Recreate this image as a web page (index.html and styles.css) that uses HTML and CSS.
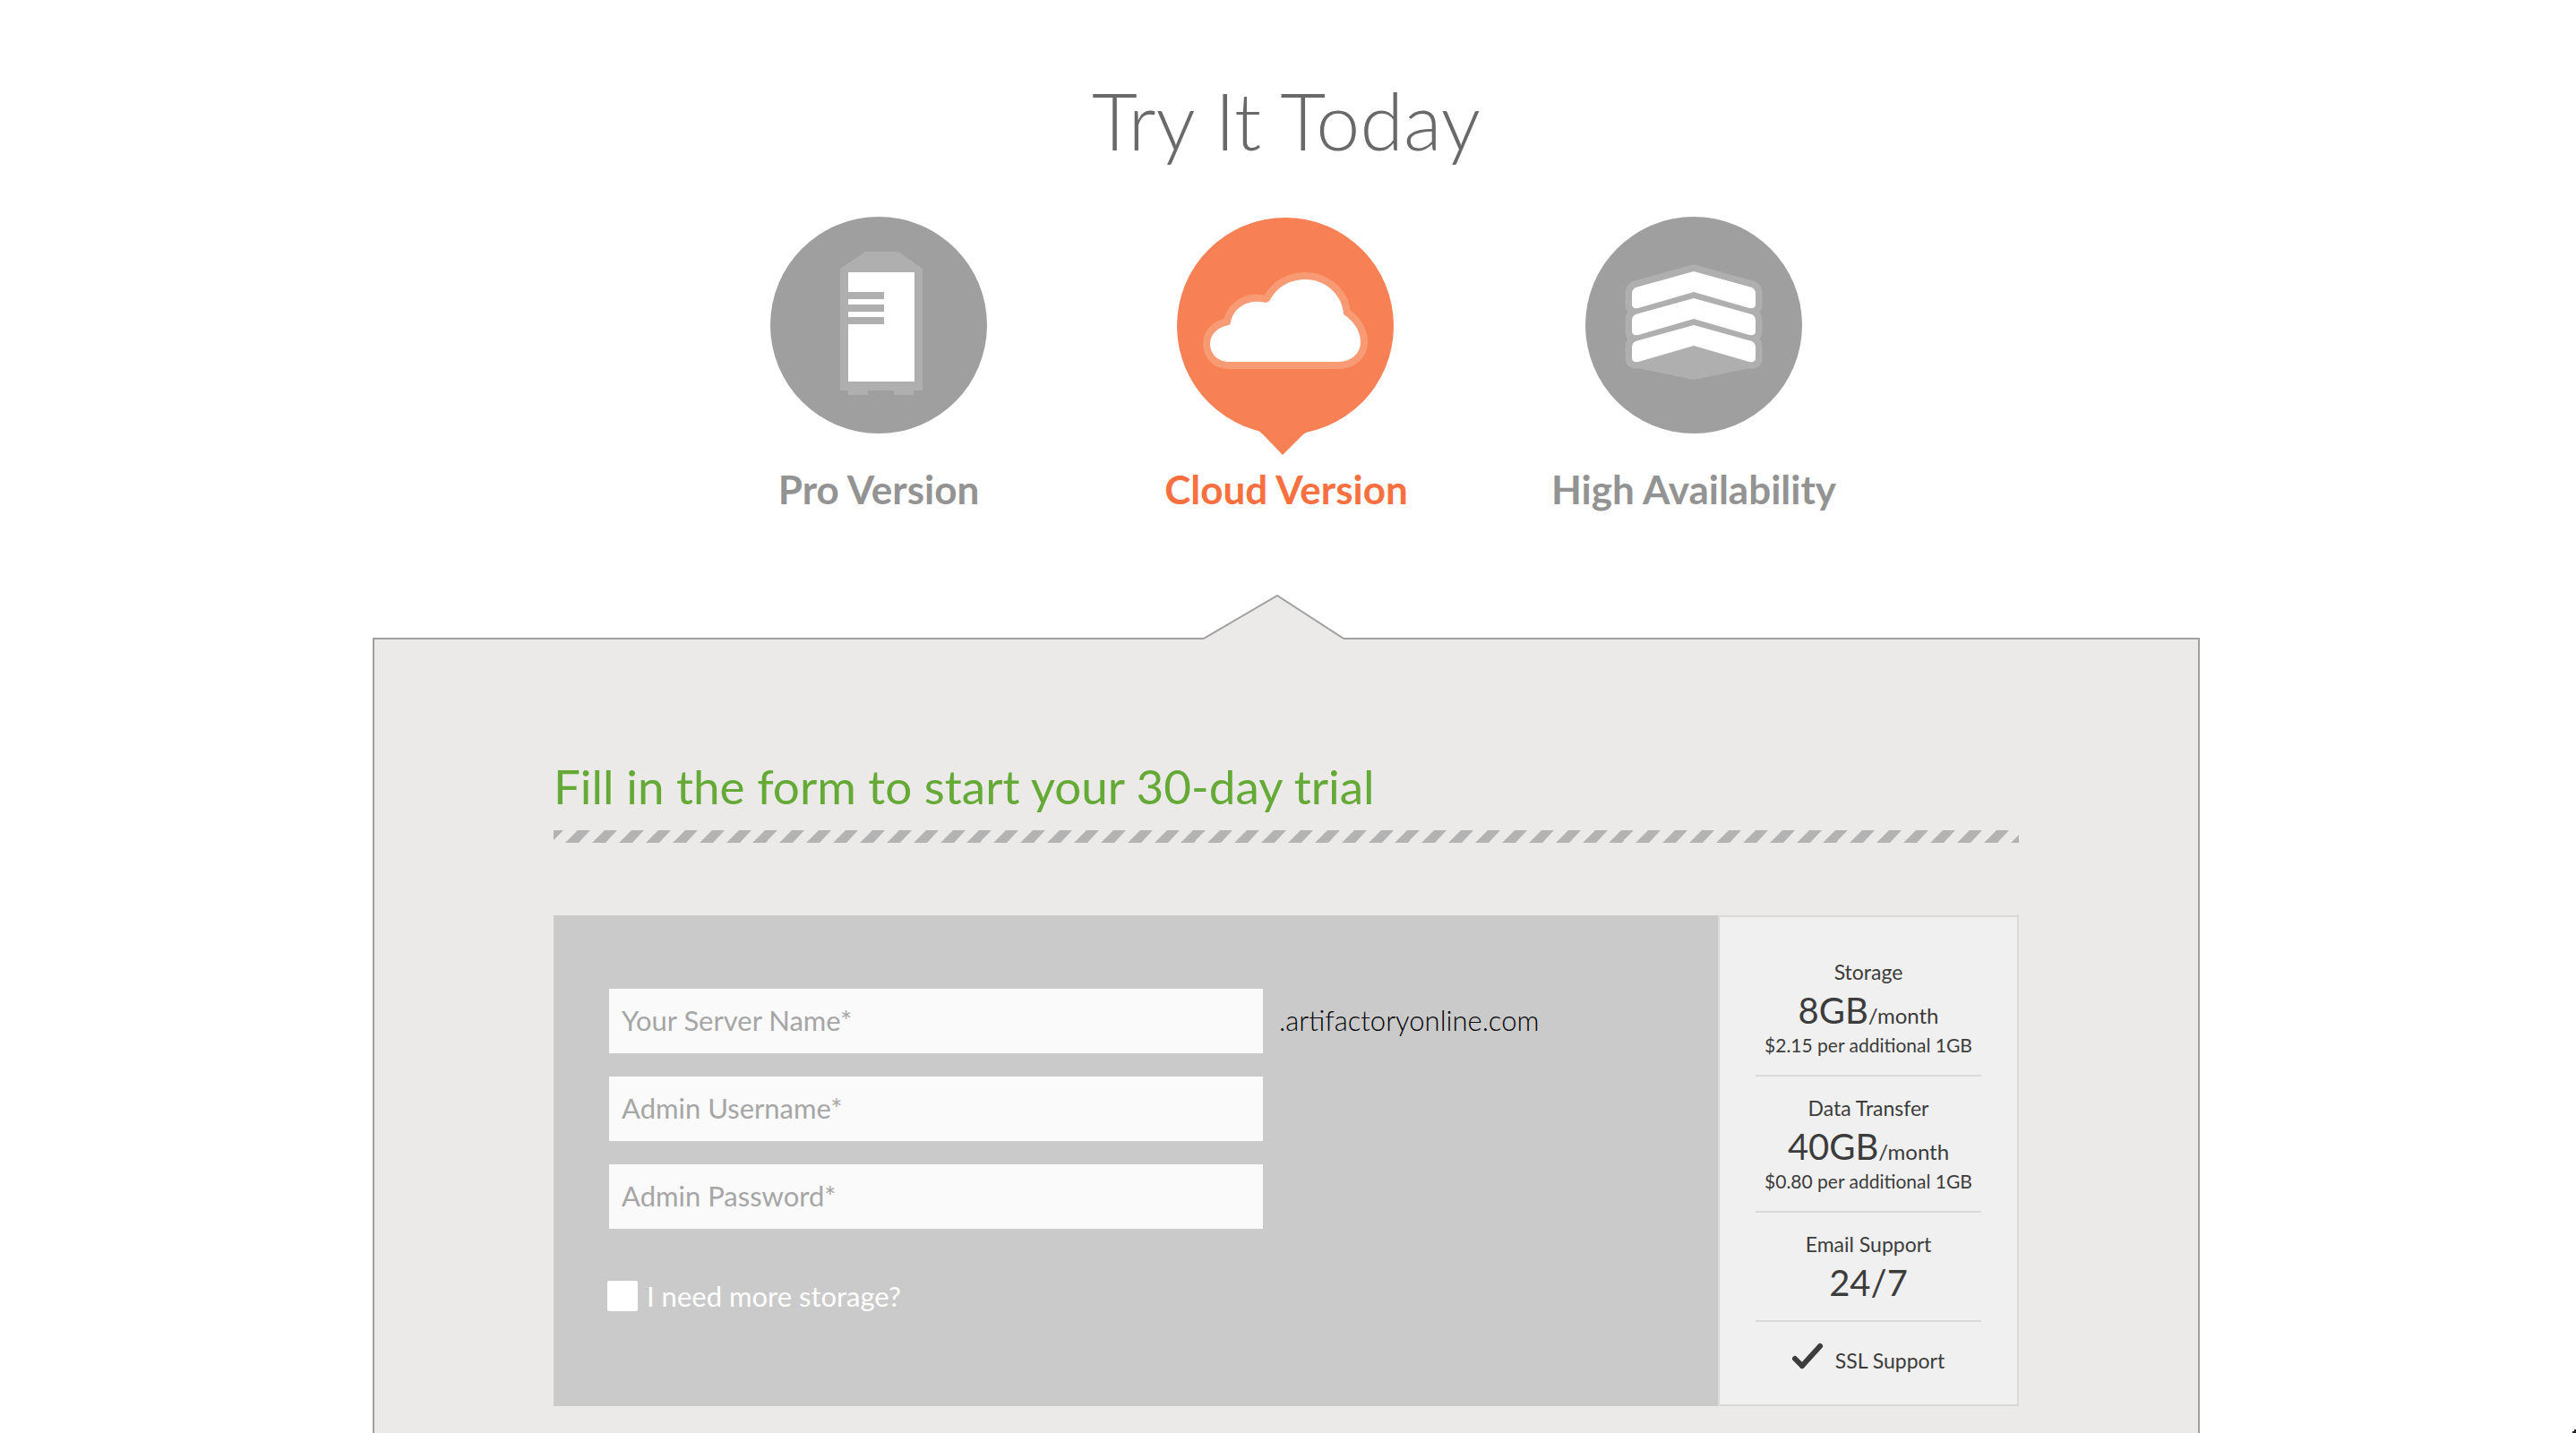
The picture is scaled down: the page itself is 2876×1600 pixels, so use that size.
FILE: index.html
```html
<!DOCTYPE html>
<html lang="en">
<head>
<meta charset="utf-8">
<meta name="viewport" content="width=device-width, initial-scale=1">
<title>Try It Today</title>
<link rel="stylesheet" href="styles.css">
</head>
<body>
<h1 class="title">Try It Today</h1>

<nav class="versions" aria-label="Versions">
  <button class="version" type="button">
    <svg class="version-icon" viewBox="0 0 244 270" aria-hidden="true">
      <circle cx="122" cy="121" r="121" fill="#9f9f9f"/>
      <path fill="#afafaf" d="M107 39H144L171 58V194H161V199H139V194H110V199H88V194H79V58Z"/>
      <path fill="#fff" d="M88 62H162V184H88V120H128V112H88V106H128V98H88V92H128V84H88Z"/>
    </svg>
    <span class="version-name">Pro Version</span>
  </button>
  <button class="version version-active" type="button" aria-current="true">
    <svg class="version-icon" viewBox="0 0 244 270" aria-hidden="true">
      <circle cx="121" cy="122" r="121" fill="#f78154"/>
      <path fill="#f78154" d="M88 237Q93 240 96 243L118 266L140 244Q143 241 150 238Z"/>
      <path fill="#fff" stroke="#f89a73" stroke-width="16" stroke-linejoin="round" paint-order="stroke" d="M58 162C46 162 37 153 37 142C37 131 46 123 58 121Q60 120 60 118C63 101 80 91 99 96Q102 96 104 93C111 79 126 70 143 70C167 70 185 88 186 109C197 116 205 127 205 140C205 153 194 162 180 162Z"/>
    </svg>
    <span class="version-name">Cloud Version</span>
  </button>
  <button class="version" type="button">
    <svg class="version-icon" viewBox="0 0 244 270" aria-hidden="true">
      <defs>
        <path id="layer" d="M122 61L187 79Q191 81 191 86V98Q191 103 184 102L122 84L60 102Q53 103 53 98V86Q53 81 57 79Z"/>
      </defs>
      <circle cx="122" cy="121" r="121" fill="#9f9f9f"/>
      <g fill="#afafaf" stroke="#afafaf" stroke-width="15" stroke-linejoin="round">
        <use href="#layer"/>
        <use href="#layer" y="30"/>
        <use href="#layer" y="60"/>
      </g>
      <path fill="#afafaf" d="M122 144L184 160L190 168L122 182L54 168L60 160Z"/>
      <g fill="#fff">
        <use href="#layer"/>
        <use href="#layer" y="30"/>
        <use href="#layer" y="60"/>
      </g>
    </svg>
    <span class="version-name">High Availability</span>
  </button>
</nav>

<main class="panel">
  <svg class="panel-arrow" viewBox="0 0 156 50" aria-hidden="true">
    <path fill="#ebeae8" d="M0 50V49L82 1L156 49V50Z"/>
    <path fill="none" stroke="#a0a0a0" stroke-width="2" d="M0 49L82 1L156 49"/>
  </svg>
  <h2 class="heading">Fill in the form to start your 30-day trial</h2>
  <svg class="stripes" aria-hidden="true">
    <defs>
      <pattern id="hatch" width="239" height="16" patternUnits="userSpaceOnUse">
        <path fill="#b3b3b3" d="M-3 15H-17L-3 1H11ZM28 15H13L27 1H41ZM58 15H43L57 1H71ZM88 15H73L87 1H101ZM118 15H103L117 1H131ZM148 15H133L147 1H161ZM178 15H163L177 1H191ZM208 15H193L207 1H221ZM237 15H222L236 1H250Z"/>
      </pattern>
    </defs>
    <rect width="100%" height="16" fill="url(#hatch)"/>
  </svg>

  <div class="trial">
    <form class="form">
      <div class="fields">
        <div class="field-row">
          <input class="field" type="text" aria-label="Your Server Name" placeholder="Your Server Name*">
          <span class="domain">.artifactoryonline.com</span>
        </div>
        <input class="field" type="text" aria-label="Admin Username" placeholder="Admin Username*">
        <input class="field" type="password" aria-label="Admin Password" placeholder="Admin Password*">
      </div>
      <label class="storage-option">
        <input class="checkbox" type="checkbox">
        I need more storage?
      </label>
    </form>

    <aside class="plan">
      <section class="plan-item">
        <p class="plan-label">Storage</p>
        <p class="plan-value">8GB<span class="plan-unit">/month</span></p>
        <p class="plan-extra">$2.15 per additional 1GB</p>
      </section>
      <section class="plan-item">
        <p class="plan-label">Data Transfer</p>
        <p class="plan-value">40GB<span class="plan-unit">/month</span></p>
        <p class="plan-extra">$0.80 per additional 1GB</p>
      </section>
      <section class="plan-item">
        <p class="plan-label">Email Support</p>
        <p class="plan-value">24/7</p>
      </section>
      <p class="plan-check">
        <svg class="check-icon" viewBox="0 0 36 40" aria-hidden="true">
          <path fill="none" stroke="#3c3c3c" stroke-width="6" stroke-linecap="round" stroke-linejoin="round" d="M3 18L11 26"/>
          <path fill="none" stroke="#3c3c3c" stroke-width="6" stroke-linecap="round" d="M11 26L31 4"/>
        </svg>
        <span class="plan-label">SSL Support</span>
      </p>
    </aside>
  </div>
</main>
<svg class="corner" viewBox="0 0 4 4" aria-hidden="true"><path fill="#222" d="M2 0H4V4H0V2H2Z"/></svg>
</body>
</html>
```
FILE: styles.css
```css
* {
  box-sizing: border-box;
}

body {
  display: flex;
  flex-direction: column;
  align-items: center;
  min-height: 100vh;
  margin: 0;
  padding: 84px 4px 0 0;
  background: #fff;
  color: #3c3c3c;
  font-family: Lato, "Open Sans", sans-serif;
}

h1,
h2,
p {
  margin: 0;
}

button,
input {
  font-family: inherit;
}

.title {
  color: #696969;
  font-size: 88px;
  font-weight: 300;
  line-height: 100px;
}

.versions {
  display: grid;
  grid-template-columns: repeat(3, 1fr);
  width: 100%;
  max-width: 1365px;
  margin: 58px 0 140px;
}

.version {
  display: flex;
  flex-direction: column;
  align-items: center;
  gap: 8px;
  padding: 0;
  border: 0;
  background: none;
  color: #939393;
  cursor: pointer;
}

.version-active {
  color: #f8703f;
}

.version-icon {
  display: block;
  width: 244px;
  height: 270px;
}

.version-name {
  font-size: 44px;
  font-weight: 700;
  line-height: 52px;
}

.panel {
  position: relative;
  flex: 1;
  width: 100%;
  max-width: 2040px;
  padding: 132px 200px 30px;
  border: 2px solid #a0a0a0;
  border-bottom: 0;
  background: #ebeae8;
}

.panel-arrow {
  position: absolute;
  top: -50px;
  left: 50%;
  width: 156px;
  height: 50px;
  margin-left: -92px;
}

.heading {
  color: #65a937;
  font-size: 53px;
  font-weight: 400;
  line-height: 64px;
}

.stripes {
  display: block;
  width: 100%;
  height: 16px;
  margin: 16px 0 80px;
}

.trial {
  display: grid;
  grid-template-columns: 1fr 336px;
}

.form {
  padding: 82px 60px 60px;
  background: #cacaca;
}

.fields {
  display: flex;
  flex-direction: column;
  gap: 26px;
  margin-bottom: 58px;
  padding-left: 2px;
}

.field-row {
  display: flex;
  align-items: center;
  gap: 18px;
}

.field {
  width: 730px;
  max-width: 100%;
  height: 72px;
  padding: 0 14px 2px;
  border: 0;
  border-radius: 0;
  background: #fafafa;
  font-size: 31px;
  font-weight: 400;
}

.field::placeholder {
  color: #a6a6a6;
  opacity: 1;
}

.domain {
  padding-bottom: 2px;
  color: #000;
  font-size: 31px;
  font-weight: 300;
}

.storage-option {
  display: flex;
  align-items: center;
  gap: 10px;
  color: #fff;
  font-size: 31px;
  line-height: 34px;
}

.checkbox {
  width: 34px;
  height: 34px;
  margin: 0;
  border-radius: 2px;
  background: #fff;
  appearance: none;
}

.checkbox:checked {
  background: #65a937;
}

.plan {
  padding: 26px 38px 0;
  border: 2px solid #d9d9d8;
  background: #f0f0f0;
  text-align: center;
}

.plan-item {
  margin: 0 2px;
  padding: 20px 0 14px;
  border-bottom: 2px solid #d9d9d8;
}

.plan-label {
  font-size: 23px;
  line-height: 30px;
}

.plan-value {
  font-size: 40px;
  line-height: 56px;
}

.plan-unit {
  font-size: 24px;
  line-height: 24px;
}

.plan-extra {
  margin-bottom: 8px;
  font-size: 21px;
  line-height: 22px;
}

.plan-check {
  display: flex;
  align-items: center;
  justify-content: center;
  gap: 12px;
  padding: 23px 0 29px;
}

.check-icon {
  width: 36px;
  height: 40px;
}

.corner {
  position: fixed;
  right: 0;
  bottom: 0;
  width: 4px;
  height: 4px;
}
```
